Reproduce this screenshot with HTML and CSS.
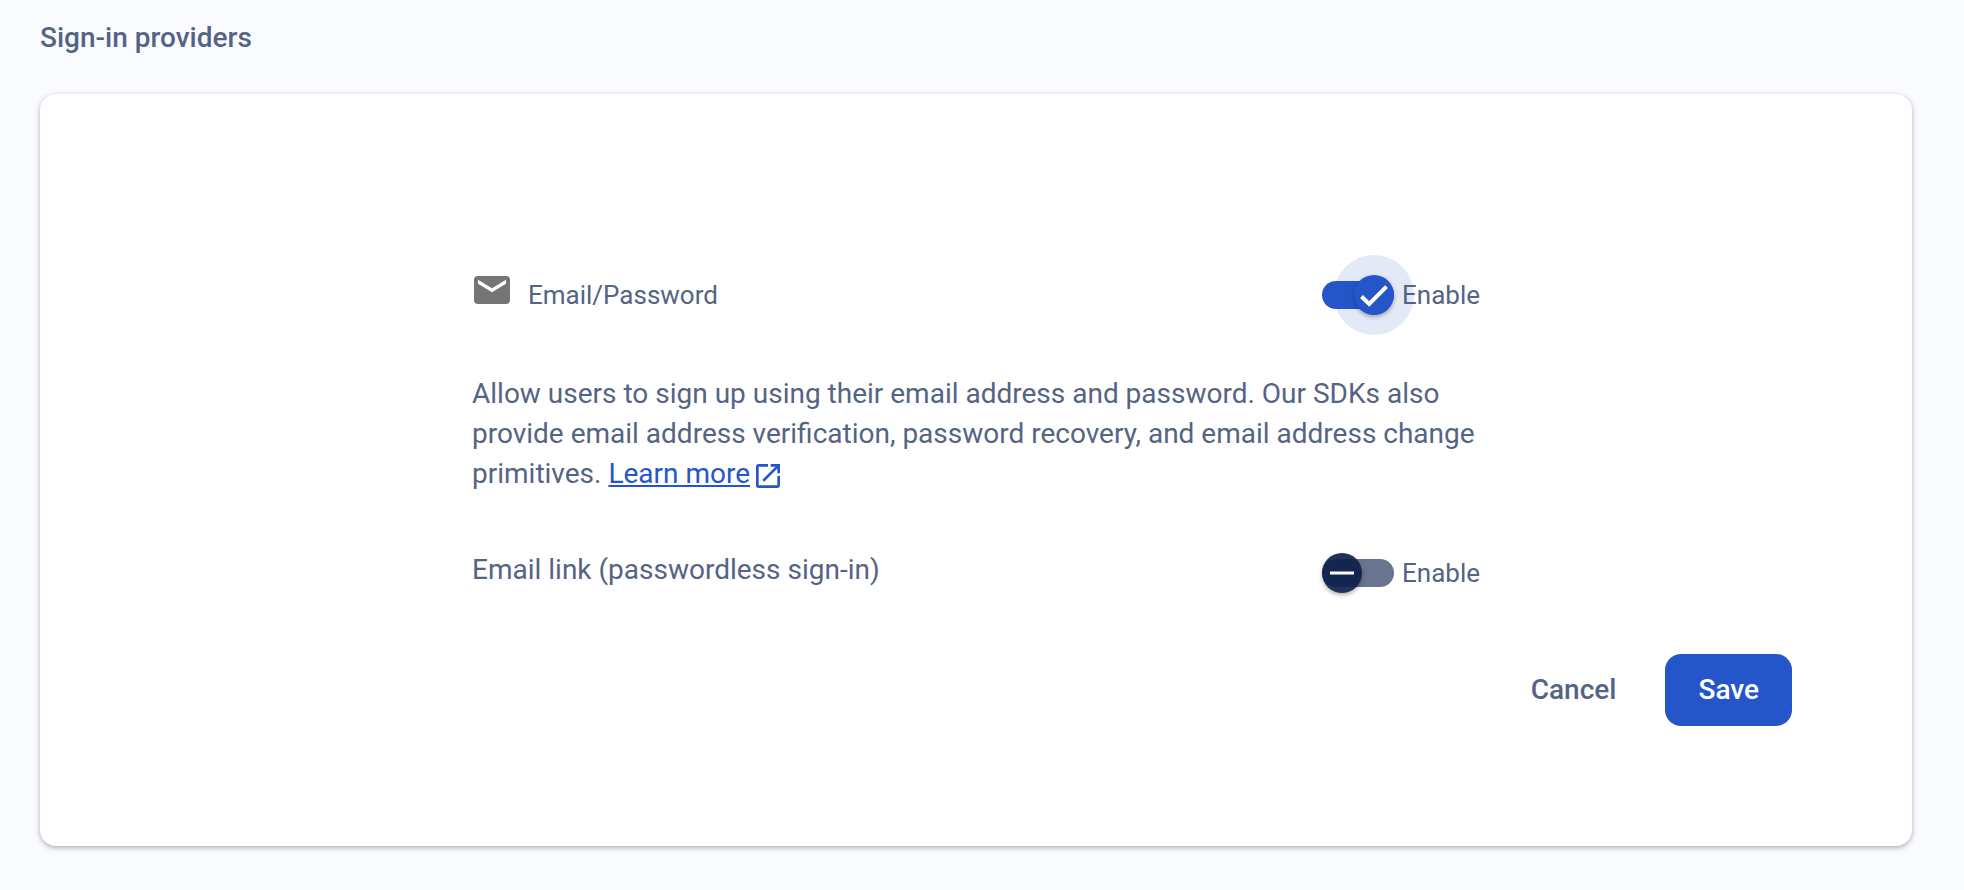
FILE: index.html
```html
<!DOCTYPE html>
<html lang="en">
<head>
<meta charset="utf-8">
<meta name="viewport" content="width=device-width, initial-scale=1">
<title>Sign-in providers</title>
<link rel="stylesheet" href="styles.css">
</head>
<body>
<main class="page">
  <h1 class="page-title">Sign-in providers</h1>
  <form class="card">
    <div class="provider">
      <div class="row row-provider">
        <span class="provider-name">
          <svg class="mail-icon" viewBox="0 0 40 28" aria-hidden="true">
            <rect x="2" width="36" height="28" rx="4" fill="#757575"/>
            <path d="M6 3.700 20 12.300 34 3.700V7.700L20 16.300 6 7.700Z" fill="#fff"/>
          </svg>
          <span>Email/Password</span>
        </span>
        <label class="switch">
          <span class="switch-control is-focused">
            <input class="switch-input" type="checkbox" checked>
            <svg class="switch-icon" viewBox="0 0 40 40" aria-hidden="true"><path d="M7.500 21.500 15.200 29 32.500 11.700" fill="none" stroke="#fff" stroke-width="4"/></svg>
          </span>
          Enable
        </label>
      </div>
      <p class="description">Allow users to sign up using their email address and password. Our SDKs also provide email address verification, password recovery, and email address change primitives. <a class="link" href="#">Learn more</a><svg class="external-icon" viewBox="3 3 18 18" aria-hidden="true"><path fill="currentColor" d="M19 19H5V5h7V3H5a2 2 0 0 0-2 2v14a2 2 0 0 0 2 2h14c1.100 0 2-.900 2-2v-7h-2v7zM14 3v2h3.590l-9.830 9.830 1.410 1.410L19 6.410V10h2V3h-7z"/></svg></p>
      <div class="row">
        <span class="option-name">Email link (passwordless sign-in)</span>
        <label class="switch">
          <span class="switch-control">
            <input class="switch-input" type="checkbox">
            <svg class="switch-icon" viewBox="0 0 40 40" aria-hidden="true"><path d="M8 20H32" stroke="#fff" stroke-width="3"/></svg>
          </span>
          Enable
        </label>
      </div>
    </div>
    <div class="actions">
      <button class="button" type="button">Cancel</button>
      <button class="button button-primary" type="submit">Save</button>
    </div>
  </form>
</main>
</body>
</html>
```

FILE: styles.css
```css
* {
  box-sizing: border-box;
}

body {
  margin: 0;
  background: #fafbff;
  color: #556483;
  font: 400 28px/40px Roboto, sans-serif;
}

.page {
  padding: 18px 52px 44px 40px;
}

.page-title {
  margin: 0 0 36px;
  font-size: 28px;
  font-weight: 500;
  line-height: 40px;
}

.card {
  padding: 178px 120px 120px;
  border-radius: 16px;
  background: #fff;
  box-shadow: 0 2px 4px rgba(60, 64, 67, 0.3), 0 1px 6px rgba(60, 64, 67, 0.15);
}

.provider {
  display: flex;
  flex-direction: column;
  gap: 56px;
  max-width: 1008px;
  margin: 0 auto;
}

.row {
  display: flex;
  align-items: flex-start;
  justify-content: space-between;
}

.row-provider {
  align-items: center;
}

.provider-name {
  display: flex;
  align-items: baseline;
  gap: 16px;
  font-size: 26px;
}

.mail-icon {
  width: 40px;
  height: 28px;
}

.description {
  margin: 0;
}

.link {
  color: #2556c9;
  text-decoration-thickness: 2px;
  text-underline-offset: 2px;
}

.external-icon {
  width: 24px;
  height: 24px;
  margin-left: 6px;
  color: #2556c9;
  vertical-align: -5px;
}

.switch {
  position: relative;
  z-index: 0;
  display: flex;
  align-items: center;
  gap: 8px;
  height: 46px;
  font-size: 26px;
}

.switch-control {
  position: relative;
  display: flex;
  align-items: center;
  width: 72px;
  height: 40px;
}

.switch-input {
  appearance: none;
  width: 72px;
  height: 28px;
  margin: 0;
  border-radius: 14px;
  background: #69748e;
  outline: none;
}

.switch-input::before {
  content: "";
  position: absolute;
  top: 0;
  left: 0;
  width: 40px;
  height: 40px;
  border-radius: 50%;
  background: rgba(12, 30, 72, 0.91);
  box-shadow: 0 2px 4px rgba(0, 0, 0, 0.3);
}

.switch-icon {
  position: absolute;
  top: 0;
  left: 0;
  width: 40px;
  height: 40px;
  pointer-events: none;
}

.switch-input:checked {
  background: #2556c9;
}

.switch-input:checked::before {
  left: 32px;
  background: #2556c9;
}

.switch-input:checked + .switch-icon {
  left: 32px;
}

.is-focused::after {
  content: "";
  position: absolute;
  z-index: -1;
  top: -20px;
  right: -20px;
  width: 80px;
  height: 80px;
  border-radius: 50%;
  background: #e4e9f8;
  pointer-events: none;
}

.actions {
  display: flex;
  justify-content: flex-end;
  gap: 16px;
  margin-top: 58px;
}

.button {
  padding: 16px 33px;
  border: 0;
  border-radius: 16px;
  background: transparent;
  color: inherit;
  font: inherit;
  font-weight: 500;
}

.button-primary {
  background: #2556c9;
  color: #fff;
}
```
